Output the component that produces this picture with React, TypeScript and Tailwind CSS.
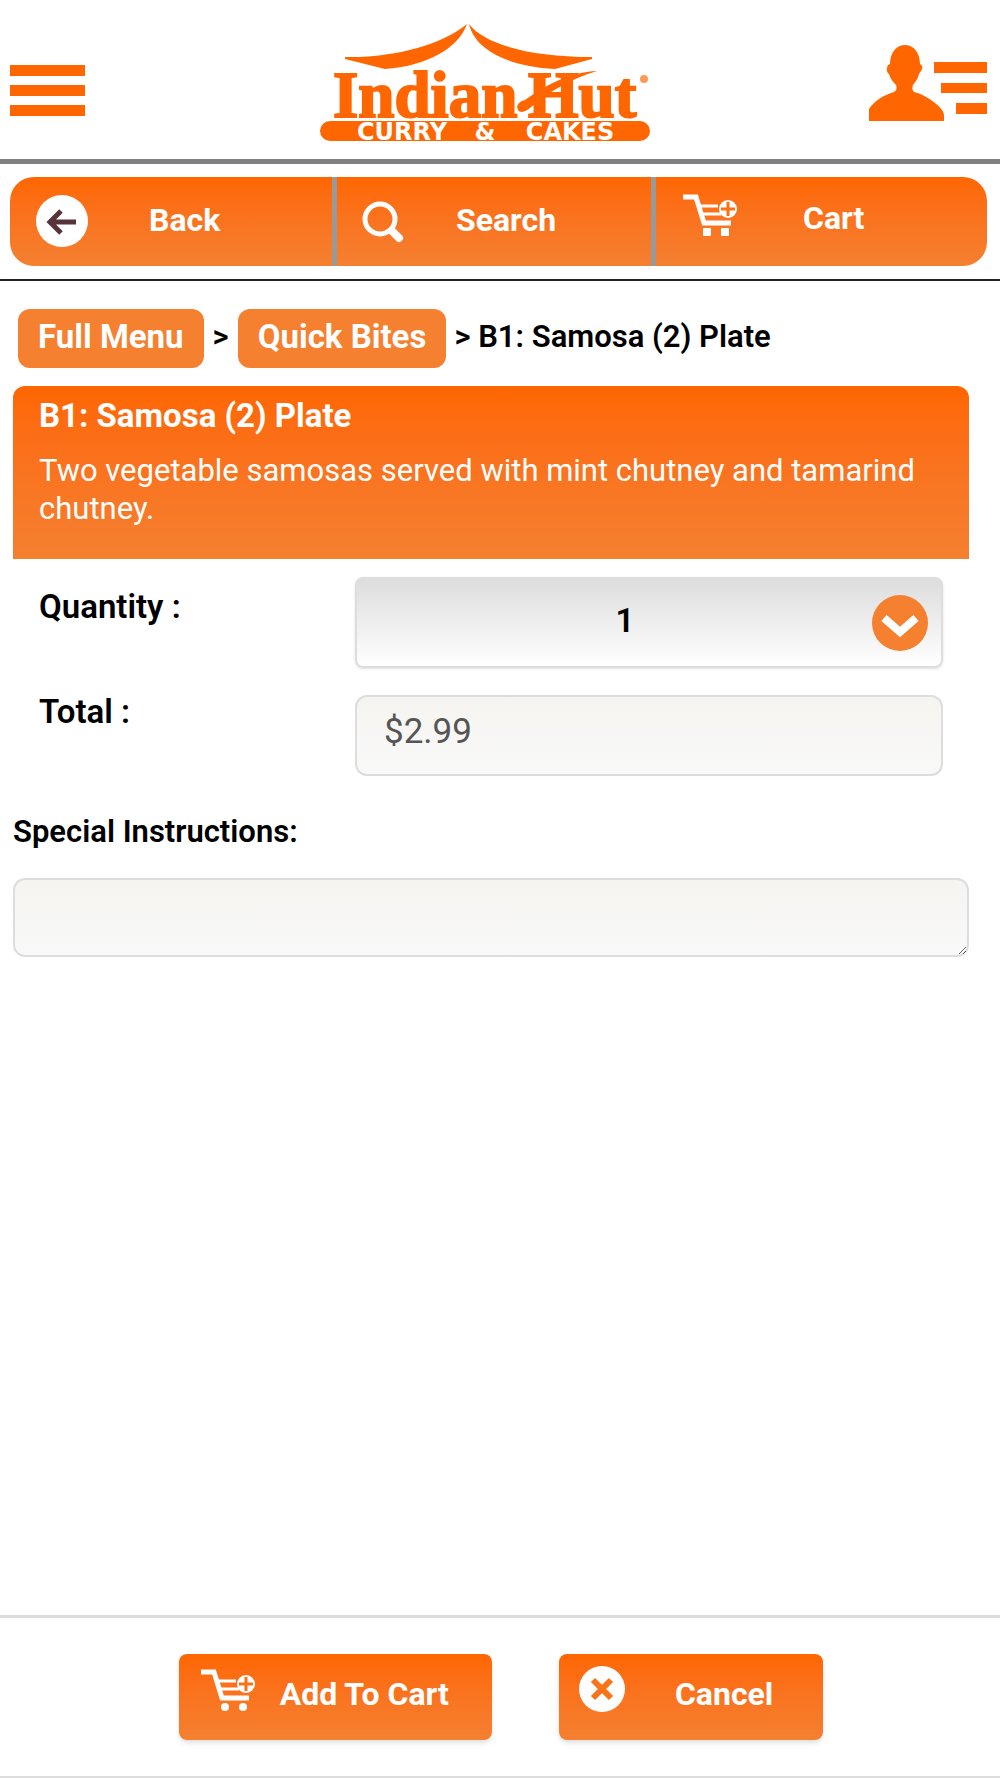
import { useState } from 'react'

const UNIT_PRICE = 2.99

function MenuIcon() {
  return (
    <svg width="75" height="51" viewBox="0 0 75 51" fill="#ff6600" aria-hidden="true">
      <rect width="75" height="11" />
      <rect y="20" width="75" height="11" />
      <rect y="40" width="75" height="11" />
    </svg>
  )
}

function AccountIcon() {
  return (
    <svg width="118" height="76" viewBox="0 0 118 76" fill="#ff6600" aria-hidden="true">
      <path d="M36 0c8 0 15 7 15 19 3 2 3 3 1 7l-2 3c-1 5-4 8-6 11-1 3-1 5 1 7 8 2 15 6 21 11 5 4 8 7 9 12v6H0V64c3-5 8-9 13-12 4-2 8-4 12-5 3-2 3-4 2-7-3-3-6-7-7-11-2-1-3-5-1-9l2-1C21 7 28 0 36 0Z" />
      <rect x="65" y="17" width="53" height="11" />
      <rect x="72" y="38" width="46" height="10" />
      <rect x="87" y="58" width="31" height="11" />
    </svg>
  )
}

function Logo() {
  return (
    <svg width="330" height="118" viewBox="0 0 330 118" fill="#ff6600" className="overflow-visible" role="img" aria-label="Indian Hut Curry & Cakes">
      <path d="M147 0C138 25 106 42 65 45L25 35V33C76 34 123 20 147 0Z" />
      <path d="M149 0C164 20 209 33 272 33V35L235 45C183 42 154 23 149 0Z" />
      <g stroke="#ff6600" strokeWidth="2" fontSize="65" fontWeight="700" className="font-['Liberation_Serif',serif]">
        <text x="13" y="93">Indian</text>
        <text x="208" y="93">Hut</text>
      </g>
      <path d="M277 47C250 48 226 61 205 76C198 78 196 82 198 86C201 90 206 87 210 84C227 69 250 55 277 47Z" />
      <circle cx="324" cy="55" r="4" fill="#ff9a55" />
      <rect y="97" width="330" height="20" rx="10" />
      <g fill="#fff" fontSize="24" fontWeight="700" textAnchor="middle" className="font-['DejaVu_Sans',sans-serif]">
        <text x="82" y="116">CURRY</text>
        <text x="165" y="116">&amp;</text>
        <text x="250" y="116">CAKES</text>
      </g>
    </svg>
  )
}

function BackIcon() {
  return (
    <svg width="53" height="53" viewBox="0 0 53 53" aria-hidden="true">
      <circle cx="26" cy="26" r="26" fill="#fff" />
      <path d="M40 27H14M25 16 14 27l11 11" fill="none" stroke="#57333a" strokeWidth="5" />
    </svg>
  )
}

function SearchIcon() {
  return (
    <svg width="42" height="42" viewBox="0 0 42 42" fill="none" stroke="#fff" aria-hidden="true">
      <circle cx="18" cy="18" r="15" strokeWidth="5" />
      <path d="m30 30 7 7" strokeWidth="8" strokeLinecap="round" />
    </svg>
  )
}

function CartIcon({ round = false }: { round?: boolean }) {
  return (
    <svg width="55" height="42" viewBox="0 0 55 42" fill="none" stroke="#fff" aria-hidden="true">
      <path d="M0 3h13l8 26h27" strokeWidth="5" />
      <path d="M17 12h18M19 20h19" strokeWidth="3" />
      <circle cx="45" cy="15" r="9" fill="#fff" stroke="none" />
      <path d="M45 8v14M38 15h14" stroke="#fb7014" strokeWidth="3" />
      <g fill="#fff" stroke="none">
        <rect x="20" y="34" width="8" height="8" rx={round ? 4 : 1} />
        <rect x="38" y="34" width="8" height="8" rx={round ? 4 : 1} />
      </g>
    </svg>
  )
}

function CancelIcon() {
  return (
    <svg width="47" height="47" viewBox="0 0 47 47" aria-hidden="true">
      <circle cx="23" cy="23" r="23" fill="#fff" />
      <path d="m14 14 18 18m0-18L14 32" stroke="#f97318" strokeWidth="6" />
    </svg>
  )
}

function ChevronIcon() {
  return (
    <svg width="56" height="56" viewBox="0 0 56 56" aria-hidden="true">
      <circle cx="28" cy="28" r="28" fill="#f48030" />
      <path d="m12 23 16 14 16-14" fill="none" stroke="#fff" strokeWidth="8" />
    </svg>
  )
}

export default function App() {
  const [quantity, setQuantity] = useState(1)
  const [instructions, setInstructions] = useState('')

  return (
    <div className="flex min-h-screen flex-col bg-white font-[Roboto,sans-serif] text-black">
      <header className="flex items-start justify-between border-b-[5px] border-[#808080] pt-6 pr-[13px] pb-[17px] pl-[10px]">
        <button type="button" aria-label="Menu" className="mt-[41px]">
          <MenuIcon />
        </button>
        <a href="#" className="ml-4">
          <Logo />
        </a>
        <button type="button" aria-label="Account" className="mt-[21px]">
          <AccountIcon />
        </button>
      </header>

      <nav className="border-b-2 border-[#222222] pt-[13px] pr-[13px] pb-[13px] pl-[10px]">
        <div className="grid h-[89px] grid-cols-[327fr_319fr_331fr] overflow-hidden rounded-3xl bg-linear-to-b from-[#ff6600] to-[#f48030] text-[32px] leading-10 font-bold text-white">
          <button type="button" className="flex items-center gap-[60px] border-r-[5px] border-[#999999] pl-[26px]">
            <BackIcon />
            <span className="pb-1">Back</span>
          </button>
          <button type="button" className="flex items-center gap-[52px] border-r-[5px] border-[#999999] pl-[25px]">
            <SearchIcon />
            <span className="pb-1">Search</span>
          </button>
          <button type="button" className="flex items-center gap-[65px] pb-2 pl-[27px]">
            <span className="pb-[6px]"><CartIcon /></span>
            <span>Cart</span>
          </button>
        </div>
      </nav>

      <main className="flex-1 pr-[31px] pl-[13px]">
        <div className="flex items-center pt-7 pl-[5px] text-[33px] leading-10">
          <a href="#" className="rounded-xl bg-[#f48030] px-5 pt-2 pb-[11px] font-bold text-white">Full Menu</a>
          <span className="px-[9px] pb-[3px] text-[31px] font-semibold">&gt;</span>
          <a href="#" className="rounded-xl bg-[#f48030] px-5 pt-2 pb-[11px] font-bold text-white">Quick Bites</a>
          <span className="pb-[3px] pl-2 text-[31px] font-semibold">&gt; B1: Samosa (2) Plate</span>
        </div>

        <section className="mt-[18px] rounded-t-xl bg-linear-to-b from-[#ff6600] to-[#f48030] px-[26px] pt-[10px] pb-[31px] text-white">
          <h1 className="text-[33px] leading-10 font-bold">B1: Samosa (2) Plate</h1>
          <p className="mt-4 text-[31px] leading-[38px]">
            Two vegetable samosas served with mint chutney and tamarind chutney.
          </p>
        </section>

        <div className="mt-[18px] mr-[26px] ml-[26px] grid grid-cols-[316fr_588fr] gap-y-6">
          <label htmlFor="quantity" className="pt-[10px] text-[33px] leading-10 font-semibold">Quantity :</label>
          <div className="relative">
            <select
              id="quantity"
              value={quantity}
              onChange={e => setQuantity(Number(e.target.value))}
              className="h-[91px] w-full appearance-none rounded-lg border-2 border-[#dddddd] bg-linear-to-b from-[#dddddd] to-white pr-12 pb-1 text-center text-[33px] font-semibold shadow-sm [text-align-last:center]"
            >
              {[1, 2, 3, 4, 5].map(n => (
                <option key={n} value={n}>{n}</option>
              ))}
            </select>
            <span className="pointer-events-none absolute top-[18px] right-[15px]">
              <ChevronIcon />
            </span>
          </div>

          <label htmlFor="total" className="text-[33px] leading-10 font-semibold">Total :</label>
          <input
            id="total"
            readOnly
            value={`$${(UNIT_PRICE * quantity).toFixed(2)}`}
            className="mt-[3px] h-[81px] w-full rounded-xl border-2 border-[#dddddd] bg-linear-to-b from-[#f5f4f0] to-[#f9f9f9] pb-2 pl-[27px] text-[35px] text-[#555555]"
          />
        </div>

        <label htmlFor="instructions" className="mt-9 block text-[31px] leading-10 font-semibold">Special Instructions:</label>
        <textarea
          id="instructions"
          value={instructions}
          onChange={e => setInstructions(e.target.value)}
          className="mt-[26px] block h-[79px] w-full rounded-xl border-2 border-[#dddddd] bg-linear-to-b from-[#f5f4f0] to-[#f9f9f9] p-3 text-[31px]"
        />
      </main>

      <footer className="flex justify-center gap-[67px] border-t-3 border-b-2 border-[#dddddd] pt-9 pb-9 pl-[2px] text-[32px] leading-10 font-bold text-white">
        <button type="button" className="flex h-[86px] items-start gap-6 rounded-lg bg-linear-to-b from-[#ff6600] to-[#f48030] pr-[43px] pl-[22px] shadow-md">
          <span className="pt-[15px]"><CartIcon round /></span>
          <span className="pt-5">Add To Cart</span>
        </button>
        <button type="button" className="flex h-[86px] items-start gap-[49px] rounded-lg bg-linear-to-b from-[#ff6600] to-[#f48030] pr-[50px] pl-5 shadow-md">
          <span className="pt-3"><CancelIcon /></span>
          <span className="pt-5">Cancel</span>
        </button>
      </footer>
    </div>
  )
}
